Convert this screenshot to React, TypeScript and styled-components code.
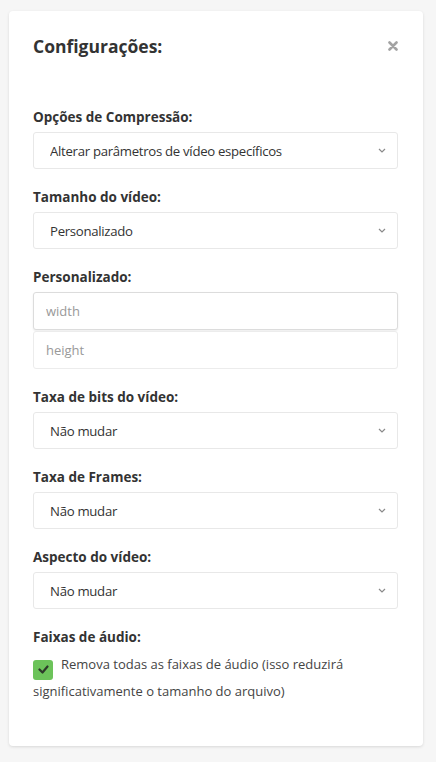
import styled, { createGlobalStyle } from "styled-components";

const GlobalStyle = createGlobalStyle`
  * { box-sizing: border-box; }
  body {
    margin: 0;
    background: #f6f6f6;
    font-family: "Open Sans", "Liberation Sans", sans-serif;
    color: #333;
  }
`;

const Page = styled.div`
  padding: 11px 13px 14px 9px;
`;

const Card = styled.div`
  background: #fff;
  border-radius: 4px;
  box-shadow: 0 1px 3px rgba(0, 0, 0, 0.12);
  padding: 22px 25px 44px 24px;
`;

const Header = styled.div`
  display: flex;
  align-items: center;
  justify-content: space-between;
  margin-bottom: 49px;
`;

const Title = styled.h2`
  margin: 0;
  font-size: 17.5px;
  font-weight: 700;
  line-height: 26px;
  color: #333;
`;

const Close = styled.button`
  border: none;
  background: none;
  padding: 0;
  margin-right: -1px;
  width: 12px;
  height: 12px;
  display: flex;
  align-items: center;
  justify-content: center;
  cursor: pointer;
`;

const Group = styled.div<{ $last?: boolean }>`
  margin-bottom: ${(p) => (p.$last ? 0 : 19)}px;
`;

const Label = styled.label`
  display: block;
  font-size: 13.5px;
  font-weight: 700;
  line-height: 18px;
  margin-bottom: 6px;
  color: #333;
`;

const SelectWrap = styled.div`
  position: relative;
`;

const Select = styled.select`
  appearance: none;
  width: 100%;
  height: 37px;
  padding: 0 30px 0 16px;
  border: 1px solid #e8e8e8;
  border-radius: 3px;
  background: #fff;
  font-family: inherit;
  font-size: 13.2px;
  letter-spacing: -0.3px;
  color: #333;
  outline: none;
`;

const Chevron = styled.svg`
  position: absolute;
  right: 12px;
  top: 16px;
  pointer-events: none;
`;

const Input = styled.input<{ $focused?: boolean }>`
  display: block;
  width: 100%;
  height: 38px;
  padding: 0 12px;
  border: 1px solid ${(p) => (p.$focused ? "#dcdcdc" : "#ececec")};
  border-radius: 3px;
  box-shadow: ${(p) => (p.$focused ? "0 1px 2px rgba(0,0,0,0.08)" : "none")};
  font-family: inherit;
  font-size: 13px;
  color: #333;
  outline: none;
  & + & {
    margin-top: 1px;
  }
  &::placeholder {
    color: #999;
  }
`;

const CheckRow = styled.label`
  display: block;
  font-size: 13px;
  line-height: 22px;
  color: #444;
  margin-top: 7px;
`;

const Box = styled.span`
  display: inline-flex;
  align-items: center;
  justify-content: center;
  width: 20px;
  height: 20px;
  border-radius: 3px;
  background: #6cc35a;
  vertical-align: -5px;
  margin-right: 8px;
`;

function SelectField({ label, value, last }: { label: string; value: string; last?: boolean }) {
  return (
    <Group $last={last}>
      <Label>{label}</Label>
      <SelectWrap>
        <Select defaultValue={value}>
          <option>{value}</option>
        </Select>
        <Chevron width="8" height="5" viewBox="0 0 8 5">
          <path d="M1 1l3 3 3-3" fill="none" stroke="#8a8a8a" strokeWidth="1.2" />
        </Chevron>
      </SelectWrap>
    </Group>
  );
}

export default function App() {
  return (
    <>
      <GlobalStyle />
      <Page>
        <Card>
          <Header>
            <Title>Configurações:</Title>
            <Close aria-label="Fechar">
              <svg width="10" height="10" viewBox="0 0 10 10">
                <path d="M1.5 1.5l7 7M8.5 1.5l-7 7" stroke="#a3a3a3" strokeWidth="2.6" strokeLinecap="round" />
              </svg>
            </Close>
          </Header>
          <SelectField label="Opções de Compressão:" value="Alterar parâmetros de vídeo específicos" />
          <SelectField label="Tamanho do vídeo:" value="Personalizado" />
          <Group>
            <Label>Personalizado:</Label>
            <Input $focused placeholder="width" />
            <Input placeholder="height" />
          </Group>
          <SelectField label="Taxa de bits do vídeo:" value="Não mudar" />
          <SelectField label="Taxa de Frames:" value="Não mudar" />
          <SelectField label="Aspecto do vídeo:" value="Não mudar" />
          <Group $last>
            <Label>Faixas de áudio:</Label>
            <CheckRow>
              <Box>
                <svg width="11" height="9" viewBox="0 0 11 9">
                  <path d="M1.5 4.5l3 3 5-6" fill="none" stroke="#2d3a2a" strokeWidth="2.2" strokeLinecap="round" strokeLinejoin="round" />
                </svg>
              </Box>
              Remova todas as faixas de áudio (isso reduzirá significativamente o tamanho do arquivo)
            </CheckRow>
          </Group>
        </Card>
      </Page>
    </>
  );
}
